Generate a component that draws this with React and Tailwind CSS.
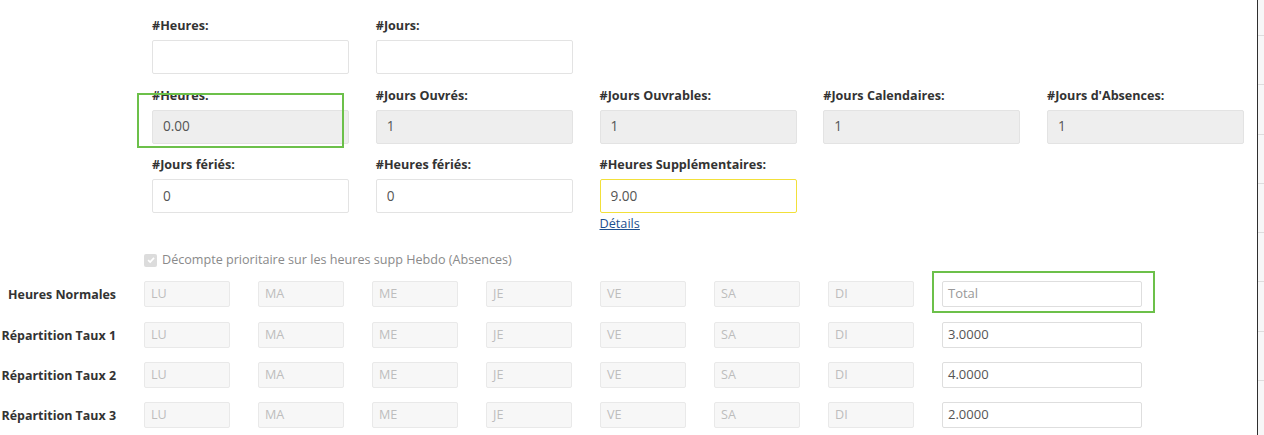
const topFields = [
  [
    { label: '#Heures:', value: '' },
    { label: '#Jours:', value: '' },
  ],
  [
    { label: '#Heures:', value: '0.00', readOnly: true, highlight: true },
    { label: '#Jours Ouvrés:', value: '1', readOnly: true },
    { label: '#Jours Ouvrables:', value: '1', readOnly: true },
    { label: '#Jours Calendaires:', value: '1', readOnly: true },
    { label: "#Jours d'Absences:", value: '1', readOnly: true },
  ],
  [
    { label: '#Jours fériés:', value: '0' },
    { label: '#Heures fériés:', value: '0' },
    { label: '#Heures Supplémentaires:', value: '9.00', warn: true, link: 'Détails' },
  ],
]

const days = ['LU', 'MA', 'ME', 'JE', 'VE', 'SA', 'DI']

const rates = [
  { label: 'Heures Normales', total: '', highlight: true },
  { label: 'Répartition Taux 1', total: '3.0000' },
  { label: 'Répartition Taux 2', total: '4.0000' },
  { label: 'Répartition Taux 3', total: '2.0000' },
]

function Field({ field }) {
  const inputClass = field.readOnly
    ? 'bg-[#eeeeee] border-[#e3e3e3]'
    : field.warn
      ? 'bg-white border-[#f2e03a]'
      : 'bg-white border-[#e3e3e3]'
  return (
    <div className="relative w-[197px]">
      <div className="h-[18px] mb-[5px] text-[12.6px] leading-[18px] font-bold text-[#333] whitespace-nowrap">{field.label}</div>
      <div className={`h-[34px] border rounded-[2px] px-[10px] flex items-center text-[13.6px] text-[#555] ${inputClass}`}>
        {field.value}
      </div>
      {field.link && (
        <a href="#" className="block mt-px text-[12.7px] leading-[18px] text-[#1d4f8f] underline">{field.link}</a>
      )}
      {field.highlight && (
        <div className="absolute left-[-15px] top-[6px] w-[207px] h-[55px] border-2 border-[#6cc04a] pointer-events-none" />
      )}
    </div>
  )
}

function DayBox({ day }) {
  return (
    <div className="w-[86px] h-[26px] border border-[#e9e9e9] bg-[#f7f7f7] rounded-[2px] px-[6px] flex items-center text-[12.6px] text-[#bdbdbd]">
      {day}
    </div>
  )
}

export default function App() {
  return (
    <div className="flex w-[1264px] h-[435px] overflow-hidden bg-white" style={{ fontFamily: '"Open Sans", "Noto Sans", sans-serif' }}>
      <div className="flex-1 min-w-0">
        <div className="pl-[152px] pt-[17px] flex flex-col gap-[12.5px]">
          {topFields.map((row, i) => (
            <div key={i} className="flex gap-[26.75px]">
              {row.map((f, j) => (
                <Field key={j} field={f} />
              ))}
            </div>
          ))}
        </div>

        <label className="mt-[18px] ml-[144px] flex items-center gap-[5px] h-[20px] text-[12.6px] text-[#8a8a8a]">
          <span className="w-[13px] h-[13px] rounded-[2px] bg-[#dcdcdc] flex items-center justify-center">
            <svg viewBox="0 0 12 12" className="w-[10px] h-[10px]" fill="none" stroke="#ffffff" strokeWidth="2">
              <path d="M2.5 6.2 5 8.6 9.6 3.4" />
            </svg>
          </span>
          Décompte prioritaire sur les heures supp Hebdo (Absences)
        </label>

        <div className="mt-[11px] flex flex-col gap-[14px]">
          {rates.map((r, i) => (
            <div key={r.label} className={`flex items-center gap-[28px] ${i === 0 ? 'mb-px' : ''}`}>
              <div className="w-[116px] pt-[2px] text-right text-[12.45px] font-bold text-[#333] whitespace-nowrap">{r.label}</div>
              {days.map((d) => (
                <DayBox key={d} day={d} />
              ))}
              <div className="relative">
                <div className={`w-[200px] h-[26px] border border-[#dedede] bg-white rounded-[2px] px-[5px] flex items-center text-[13px] ${r.total ? 'text-[#555]' : 'text-[#999]'}`}>
                  {r.total || 'Total'}
                </div>
                {r.highlight && (
                  <div className="absolute left-[-10px] top-[-10px] w-[223px] h-[42px] border-2 border-[#6cc04a] pointer-events-none" />
                )}
              </div>
            </div>
          ))}
        </div>
      </div>

      {/* edge of the neighbouring table */}
      <div className="w-[7px] shrink-0 border-l border-[#2f2f2f] bg-[#f7f7f7] flex flex-col pt-[35px] gap-[48.3px]">
        {Array.from({ length: 8 }).map((_, i) => (
          <div key={i} className="h-px bg-[#dddddd]" />
        ))}
      </div>
    </div>
  )
}
